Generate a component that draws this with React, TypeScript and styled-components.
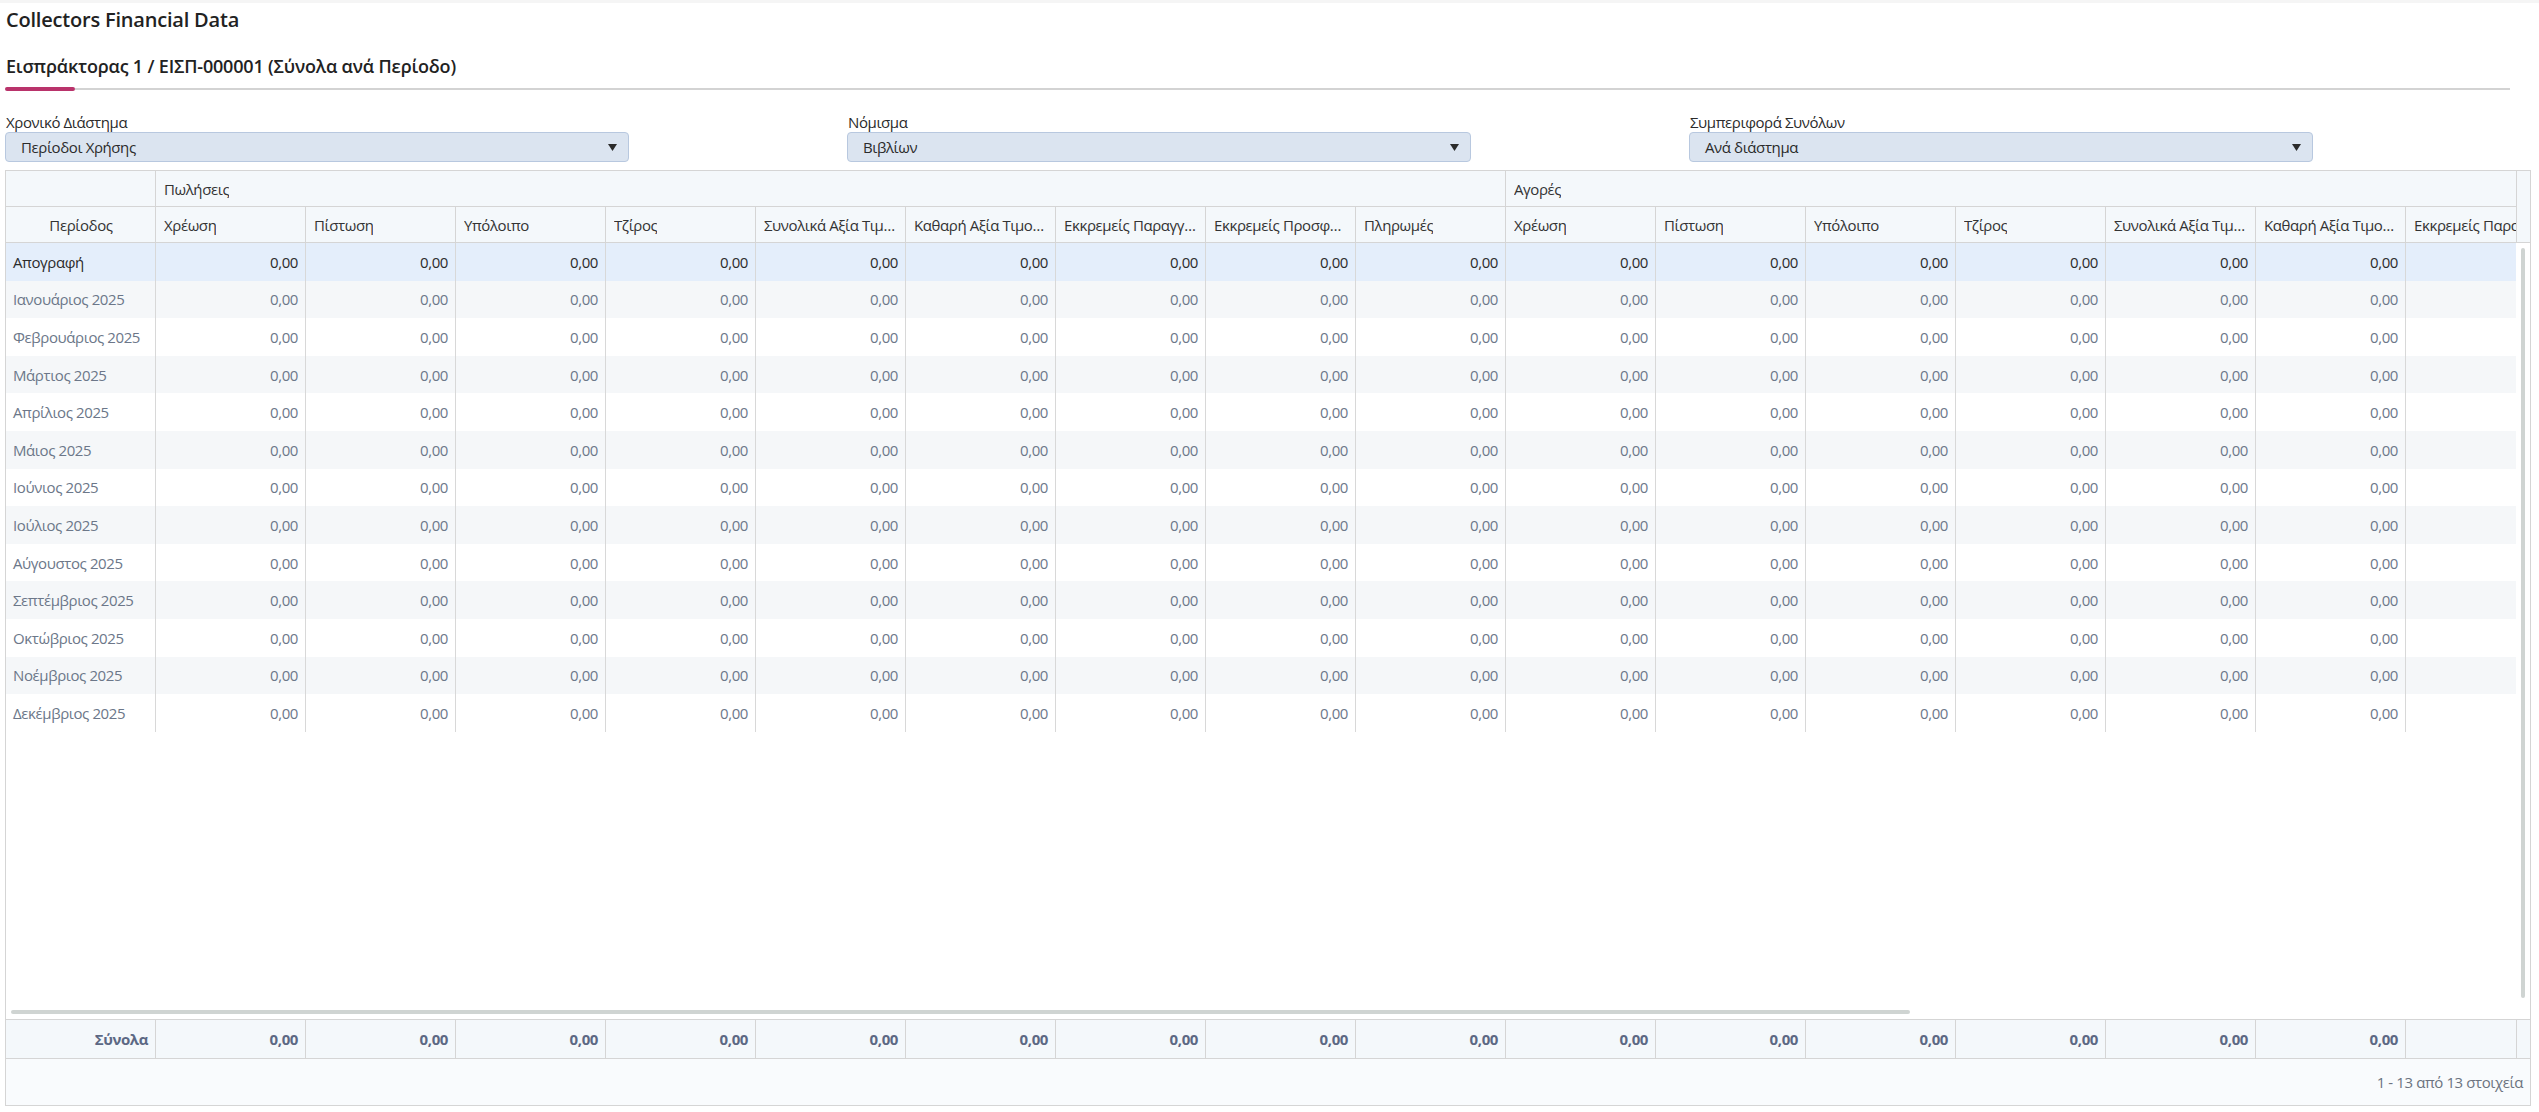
import styled, { createGlobalStyle } from 'styled-components';

const GlobalStyle = createGlobalStyle`
  html, body {
    margin: 0;
    padding: 0;
    background: #fff;
  }
  body {
    font-family: 'Open Sans', 'Noto Sans', sans-serif;
    letter-spacing: -0.025em;
    color: #2b2b2b;
  }
  * {
    box-sizing: border-box;
  }
`;

const PERIOD_W = 150;
const COL_W = 150;
const ROW_H = 37.6;

const COLUMNS = [
  'Χρέωση',
  'Πίστωση',
  'Υπόλοιπο',
  'Τζίρος',
  'Συνολικά Αξία Τιμολογίων',
  'Καθαρή Αξία Τιμολογίων',
  'Εκκρεμείς Παραγγελίες',
  'Εκκρεμείς Προσφορές',
  'Πληρωμές',
];

const GROUPS = ['Πωλήσεις', 'Αγορές'];

const PERIODS = [
  'Απογραφή',
  'Ιανουάριος 2025',
  'Φεβρουάριος 2025',
  'Μάρτιος 2025',
  'Απρίλιος 2025',
  'Μάιος 2025',
  'Ιούνιος 2025',
  'Ιούλιος 2025',
  'Αύγουστος 2025',
  'Σεπτέμβριος 2025',
  'Οκτώβριος 2025',
  'Νοέμβριος 2025',
  'Δεκέμβριος 2025',
];

const FILTERS = [
  { label: 'Χρονικό Διάστημα', value: 'Περίοδοι Χρήσης' },
  { label: 'Νόμισμα', value: 'Βιβλίων' },
  { label: 'Συμπεριφορά Συνόλων', value: 'Ανά διάστημα' },
];

const Page = styled.div`
  padding: 0 8px 6px 5px;
  border-top: 3px solid #f5f5f5;
`;

const Title = styled.h1`
  margin: 3px 0 0 1px;
  font-size: 20px;
  line-height: 27px;
  font-weight: 600;
  letter-spacing: -0.01em;
  color: #222;
`;

const TabTitle = styled.h2`
  margin: 20px 0 0 1px;
  font-size: 18px;
  line-height: 27px;
  font-weight: 600;
  letter-spacing: -0.01em;
  color: #222;
`;

const TabLine = styled.div`
  display: flex;
  align-items: center;
  height: 4px;
  margin: 7px 21px 0 0;
`;

const TabIndicator = styled.div`
  width: 70px;
  height: 4px;
  border-radius: 2px;
  background: #b9336b;
`;

const TabRest = styled.div`
  flex: 1;
  height: 2px;
  background: #d3d3d3;
`;

const Filters = styled.div`
  display: grid;
  grid-template-columns: repeat(3, 1fr);
  margin-top: 21px;
`;

const Field = styled.div`
  display: flex;
  flex-direction: column;
`;

const Label = styled.label`
  font-size: 15px;
  line-height: 20px;
  color: #2b2b2b;
  padding-left: 1px;
`;

const SelectBox = styled.div`
  display: flex;
  align-items: center;
  justify-content: space-between;
  width: 624px;
  height: 30px;
  padding: 0 11px 0 15px;
  background: #dbe4f0;
  border: 1px solid #b8c8df;
  border-radius: 4px;
  font-size: 15px;
  color: #2b2b2b;
`;

const Grid = styled.div`
  margin-top: 8px;
  border: 1px solid #d5d5d5;
`;

const HeaderArea = styled.div`
  display: flex;
  background: #f4f8fb;
  border-bottom: 1px solid #d5d5d5;
`;

const HeaderScroll = styled.div`
  flex: 1;
  overflow: hidden;
`;

const Gutter = styled.div`
  width: 14px;
  flex-shrink: 0;
  border-left: 1px solid #d5d5d5;
`;

const HeadRow = styled.div<{ $last?: boolean }>`
  display: flex;
  height: ${({ $last }) => ($last ? 35 : 36)}px;
  border-bottom: ${({ $last }) => ($last ? 'none' : '1px solid #d5d5d5')};
`;

const HeadCell = styled.div<{ $w: number; $center?: boolean }>`
  flex: 0 0 ${({ $w }) => $w}px;
  display: flex;
  align-items: center;
  justify-content: ${({ $center }) => ($center ? 'center' : 'flex-start')};
  padding: 0 7px 0 8px;
  border-right: 1px solid #d5d5d5;
  font-size: 15px;
  color: #333;
  min-width: 0;
`;

const HeadText = styled.span`
  display: block;
  overflow: hidden;
  white-space: nowrap;
  text-overflow: ellipsis;
`;

const BodyArea = styled.div`
  display: grid;
  grid-template-columns: 1fr 14px;
  grid-template-rows: 1fr 14px;
  height: 776px;
`;

const Viewport = styled.div`
  overflow: hidden;
`;

const Rows = styled.div`
  width: 3303px;
`;

const Row = styled.div<{ $variant: 'selected' | 'alt' | 'plain' | 'footer' }>`
  display: flex;
  height: ${({ $variant }) => ($variant === 'footer' ? 38 : ROW_H)}px;
  background: ${({ $variant }) =>
    $variant === 'selected'
      ? '#e4eefb'
      : $variant === 'alt'
        ? '#f5f7f9'
        : $variant === 'footer'
          ? 'transparent'
          : '#fff'};
  color: ${({ $variant }) => ($variant === 'selected' ? '#2b2b2b' : '#6c7789')};
`;

const Cell = styled.div<{ $w: number; $align?: 'left' | 'right' }>`
  flex: 0 0 ${({ $w }) => $w}px;
  display: flex;
  align-items: center;
  justify-content: ${({ $align }) => ($align === 'left' ? 'flex-start' : 'flex-end')};
  padding: 0 7px;
  border-right: 1px solid #d8d8d8;
  font-size: 15px;
  white-space: nowrap;
  overflow: hidden;
`;

const VTrack = styled.div`
  background: #fff;
  padding: 5px;
`;

const VThumb = styled.div`
  width: 4px;
  height: 750px;
  border-radius: 2px;
  background: #cfd4d2;
`;

const HTrack = styled.div`
  background: #fff;
  padding: 5px;
`;

const HThumb = styled.div`
  width: 1899px;
  height: 4px;
  border-radius: 2px;
  background: #cfd4d2;
`;

const Corner = styled.div`
  background: #fff;
`;

const FooterArea = styled.div`
  display: flex;
  height: 39px;
  background: #f4f8fb;
  border-top: 1px solid #d5d5d5;
`;

const FootCell = styled(Cell)`
  font-weight: 700;
  color: #5c6884;
  border-right-color: #d5d5d5;
`;

const Pager = styled.div`
  display: flex;
  align-items: center;
  justify-content: flex-end;
  height: 47px;
  padding: 0 7px;
  background: #f9fbfd;
  border-top: 1px solid #d5d5d5;
  font-size: 15px;
  color: #6c7380;
`;

function Caret() {
  return (
    <svg width="9" height="7" viewBox="0 0 9 7">
      <path d="M0 0h9L4.5 7z" fill="#2b2b2b" />
    </svg>
  );
}

export default function App() {
  const allColumns = GROUPS.flatMap((g) => COLUMNS.map((c) => `${g}-${c}`));

  return (
    <>
      <GlobalStyle />
      <Page>
        <Title>Collectors Financial Data</Title>
        <TabTitle>Εισπράκτορας 1 / ΕΙΣΠ-000001 (Σύνολα ανά Περίοδο)</TabTitle>
        <TabLine>
          <TabIndicator />
          <TabRest />
        </TabLine>

        <Filters>
          {FILTERS.map((f) => (
            <Field key={f.label}>
              <Label>{f.label}</Label>
              <SelectBox>
                <span>{f.value}</span>
                <Caret />
              </SelectBox>
            </Field>
          ))}
        </Filters>

        <Grid>
          <HeaderArea>
            <HeaderScroll>
              <HeadRow>
                <HeadCell $w={PERIOD_W} />
                {GROUPS.map((g) => (
                  <HeadCell key={g} $w={COL_W * COLUMNS.length}>
                    <HeadText>{g}</HeadText>
                  </HeadCell>
                ))}
              </HeadRow>
              <HeadRow $last>
                <HeadCell $w={PERIOD_W} $center>
                  <HeadText>Περίοδος</HeadText>
                </HeadCell>
                {allColumns.map((key) => (
                  <HeadCell key={key} $w={COL_W}>
                    <HeadText>{key.split('-')[1]}</HeadText>
                  </HeadCell>
                ))}
              </HeadRow>
            </HeaderScroll>
            <Gutter />
          </HeaderArea>

          <BodyArea>
            <Viewport>
              <Rows>
                {PERIODS.map((p, i) => (
                  <Row key={p} $variant={i === 0 ? 'selected' : i % 2 === 1 ? 'alt' : 'plain'}>
                    <Cell $w={PERIOD_W} $align="left">
                      {p}
                    </Cell>
                    {allColumns.map((key) => (
                      <Cell key={key} $w={COL_W}>
                        0,00
                      </Cell>
                    ))}
                  </Row>
                ))}
              </Rows>
            </Viewport>
            <VTrack>
              <VThumb />
            </VTrack>
            <HTrack>
              <HThumb />
            </HTrack>
            <Corner />
          </BodyArea>

          <FooterArea>
            <HeaderScroll>
              <Rows>
                <Row $variant="footer">
                  <FootCell $w={PERIOD_W}>Σύνολα</FootCell>
                  {allColumns.map((key) => (
                    <FootCell key={key} $w={COL_W}>
                      0,00
                    </FootCell>
                  ))}
                </Row>
              </Rows>
            </HeaderScroll>
            <Gutter />
          </FooterArea>

          <Pager>1 - 13 από 13 στοιχεία</Pager>
        </Grid>
      </Page>
    </>
  );
}
